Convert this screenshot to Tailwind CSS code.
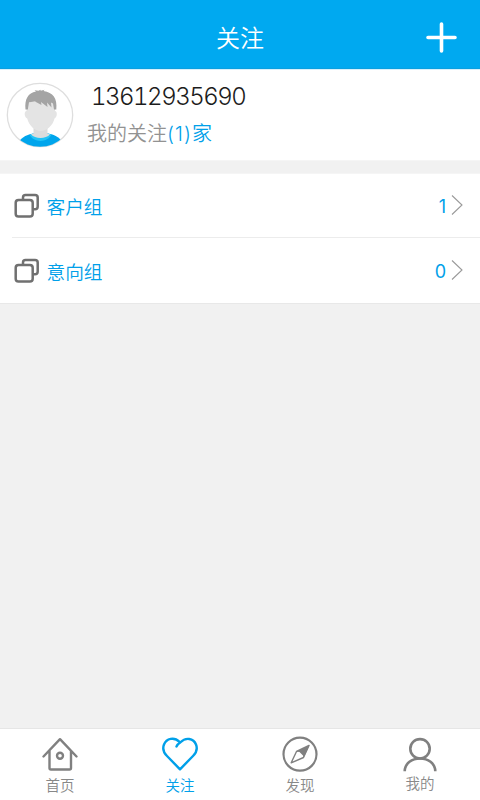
<!DOCTYPE html>
<html lang="zh">
<head>
<meta charset="utf-8">
<title>关注</title>
<script src="https://cdn.jsdelivr.net/npm/@tailwindcss/browser@4"></script>
</head>
<body class="bg-[#f1f1f1]">
<div class="w-[480px] h-[800px] flex flex-col overflow-hidden font-['Noto_Sans_CJK_SC',sans-serif] font-[350]">
  <header class="h-[69px] shrink-0 bg-[#00a9f0] border-b border-[#0a9fe0] grid grid-cols-3 items-center pt-[6px]">
    <span></span>
    <h1 class="text-2xl leading-8 text-white text-center font-[350]">关注</h1>
    <svg class="justify-self-end mr-[23px] w-[31px] h-[31px]" viewBox="0 0 31 31" fill="none" stroke="#fff" stroke-width="3.6" stroke-linecap="round"><path d="M15.5 2v27M2 15.500h27"/></svg>
  </header>
  <section class="h-[92px] shrink-0 bg-white border-t border-[#d5f0fc] border-b border-b-[#f5f5f5] flex pl-[6px]">
    <svg class="mt-[12px] w-[68px] h-[66px] shrink-0" viewBox="0 0 68 66">
      <defs><clipPath id="av"><ellipse cx="34" cy="33" rx="32.500" ry="31.800"/></clipPath></defs>
      <ellipse cx="34" cy="33" rx="32.700" ry="31.700" fill="#fff" stroke="#dedede" stroke-width="1.300"/>
      <g clip-path="url(#av)">
        <path d="M13 60C16 54.500 22 52.500 27 51.500h15c6 1 11 3.500 14 8v7H13z" fill="#00a5ec"/>
        <path d="M23.500 52.500c4 8.500 18 8.500 22 0l-4-1H28z" fill="#22c3f5"/>
        <path d="M27.500 42h14v9.500c1 .5 2 .6 2.500.8-4 5-15 5-19 0l2.500-.8z" fill="#dcdcdc"/>
        <path d="M20.500 20h28.500v9c2.500 0 2.500 6-.5 7.500-1.500 7-8 12.500-13.800 12.500S23 43.500 21.200 36.500C18 35 18 29 20.500 29z" fill="#e4e4e4"/>
        <path d="M19.500 27.500C18.500 17 22 11 30 9.500l-1.500-1.200 4 .5 2-1 .2.900 3.800-.9-1 1.200C47 10.500 51.500 16 50.300 27.500H48l-1-6-2-1 .5 5-4.500-5 .5 4.500-6.500-5 .5 3-6.500-3.500-6 .8-1.200 7.200z" fill="#a4a4a4"/>
      </g>
    </svg>
    <div class="ml-[13px] pt-[12px]">
      <div class="font-['Inter',sans-serif] font-light text-2xl leading-[30px] text-[#1c1c1c] pl-[4px] tabular-nums tracking-[-1.5px]">13612935690</div>
      <div class="text-[20px] leading-[28px] mt-[7px] text-[#929292]">我的关注<span class="text-[#00a0e9]"><span class="font-['Inter',sans-serif] font-light tracking-[1.100px]">(1)</span>家</span></div>
    </div>
  </section>
  <section class="mt-[12px] h-[131px] shrink-0 bg-white border-y border-[#e8e8e8] border-t-[#f5f5f5] text-[#00a0e9]">
    <div class="h-[64px] ml-[12px] border-b border-[#ececec] flex items-center pr-[17px]">
      <svg class="ml-[2px] w-[26px] h-[26px]" viewBox="0 0 26 26" fill="none" stroke="#707070" stroke-width="2.500"><path d="M9 7V4.500Q9 2 11.500 2H21Q23.700 2 23.700 4.500V13.500Q23.700 16.300 21 16.300H19"/><rect x="1.700" y="7" width="17" height="16.500" rx="2.800"/></svg>
      <span class="ml-[6.500px] text-[18.700px] leading-7">客户组</span>
      <span class="ml-auto mt-[2px] text-[18px] leading-7 font-['Inter',sans-serif] font-normal">1</span>
      <svg class="ml-[5px] -mt-[1px] w-[12px] h-[22px]" viewBox="0 0 12 22" fill="none" stroke="#9a9a9a" stroke-width="1.100"><path d="M1 1.500L11 11 1 20.500"/></svg>
    </div>
    <div class="h-[65px] ml-[12px] flex items-center pr-[17px]">
      <svg class="ml-[2px] w-[26px] h-[26px]" viewBox="0 0 26 26" fill="none" stroke="#707070" stroke-width="2.500"><path d="M9 7V4.500Q9 2 11.500 2H21Q23.700 2 23.700 4.500V13.500Q23.700 16.300 21 16.300H19"/><rect x="1.700" y="7" width="17" height="16.500" rx="2.800"/></svg>
      <span class="ml-[6.500px] text-[18.700px] leading-7">意向组</span>
      <span class="ml-auto mt-[2px] text-[18px] leading-7 font-['Inter',sans-serif] font-normal">0</span>
      <svg class="ml-[5px] -mt-[1px] w-[12px] h-[22px]" viewBox="0 0 12 22" fill="none" stroke="#9a9a9a" stroke-width="1.100"><path d="M1 1.500L11 11 1 20.500"/></svg>
    </div>
  </section>
  <nav class="mt-auto h-[72px] shrink-0 bg-white border-t border-[#e6e6e6] grid grid-cols-4 text-[14.500px] leading-5 text-[#888] text-center">
    <a class="flex flex-col items-center pt-[5px]">
      <svg class="w-[40px] h-[40px]" viewBox="0 0 40 40" fill="none" stroke="#808080" stroke-width="2.400" stroke-linecap="round" stroke-linejoin="round"><path d="M3.500 22.500L20 5.200l16.500 17.300M9.500 17v17q0 1.500 1.500 1.500h18.500q1.500 0 1.500-1.500V17"/><circle cx="20" cy="21.700" r="3"/></svg>
      <span class="mt-[1px]">首页</span>
    </a>
    <a class="flex flex-col items-center pt-[5px] text-[#00a0e9]">
      <svg class="w-[40px] h-[40px]" viewBox="0 0 40 40" fill="none" stroke="#00a0e9" stroke-width="2.400" stroke-linecap="round" stroke-linejoin="round"><path d="M19.500 7.800C14 2.500 6.500 4.500 4 10.500c-2 5 0 8.500 3 11.500l13 13.300L33 22c3-3 5-6.500 3-11.500C33.500 4 25.500 3 20.500 8.300q-3 2-4 4.200"/></svg>
      <span class="mt-[1px]">关注</span>
    </a>
    <a class="flex flex-col items-center pt-[5px]">
      <svg class="w-[40px] h-[40px]" viewBox="0 0 40 40" fill="none" stroke="#808080" stroke-width="2.200"><circle cx="20" cy="20.200" r="16.500"/><path d="M29 11.500L16.500 17.500l-5.300 11.300L23.500 23.500z" stroke-width="1.400" stroke-linejoin="round"/><path d="M29.500 11.200L16.500 17.500l3 .5 3.500 3.500.5 2.500z" fill="#808080" stroke="none"/></svg>
      <span class="mt-[1px]">发现</span>
    </a>
    <a class="flex flex-col items-center pt-[5px]">
      <svg class="w-[40px] h-[40px]" viewBox="0 0 40 40" fill="none" stroke="#808080" stroke-width="2.600"><circle cx="20" cy="14.800" r="9.700"/><path d="M4.700 37.200C5 29 12 24.500 20 24.500S35 29 35.300 37.200"/></svg>
      <span class="-mt-[1px]">我的</span>
    </a>
  </nav>
</div>
</body>
</html>
